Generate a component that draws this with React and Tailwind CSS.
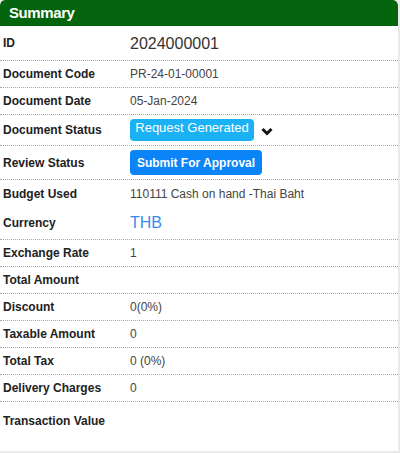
const rows = [
  { label: 'Document Code', value: 'PR-24-01-00001', h: 'h-[27px]' },
  { label: 'Document Date', value: '05-Jan-2024', h: 'h-[27px]' },
]

const lowerRows = [
  { label: 'Exchange Rate', value: '1', h: 'h-[27px]' },
  { label: 'Total Amount', value: '', h: 'h-[27px]' },
  { label: 'Discount', value: '0(0%)', h: 'h-[27px]' },
  { label: 'Taxable Amount', value: '0', h: 'h-[27px]' },
  { label: 'Total Tax', value: '0 (0%)', h: 'h-[27px]' },
  { label: 'Delivery Charges', value: '0', h: 'h-[27px]' },
]

const Label = ({ children }) => (
  <div className="w-[130px] shrink-0 pl-[3px] text-[12px] font-bold text-[#222]">{children}</div>
)

const Row = ({ label, children, h, line = true }) => (
  <div
    className={`flex items-center ${h} ${line ? 'border-b border-dotted border-[#86bd86]' : ''}`}
  >
    <Label>{label}</Label>
    <div className="text-[12px] text-[#444]">{children}</div>
  </div>
)

export default function App() {
  return (
    <div
      className="w-[400px] h-[453px] bg-[#e9e9e9]"
      style={{ fontFamily: '"Liberation Sans", Arial, sans-serif' }}
    >
      <div className="w-[398px] h-[451px] bg-white rounded-t-[5px] overflow-hidden">
        <div className="h-[26px] bg-[#05650f] rounded-t-[5px] flex items-center pl-[9px] text-[15px] tracking-[-0.4px] font-bold text-white">
          Summary
        </div>

        <Row label="ID" h="h-[35px]">
          <span className="text-[16px] text-[#333] pt-[2px] block">2024000001</span>
        </Row>

        {rows.map((r, i) => (
          <Row key={i} label={r.label} h={r.h}>
            {r.value}
          </Row>
        ))}

        <Row label="Document Status" h="h-[31px]">
          <div className="flex items-center">
            <span className="inline-block w-[124px] h-[22px] rounded-[4px] bg-[#1ab2f5] text-white text-[13px] leading-[18px] text-center">
              Request Generated
            </span>
            <svg className="ml-[7px] mt-[2px]" width="12" height="9" viewBox="0 0 12 9">
              <path d="M1.5 2 L6 6.5 L10.5 2" fill="none" stroke="#111" strokeWidth="3" />
            </svg>
          </div>
        </Row>

        <Row label="Review Status" h="h-[34px]">
          <button className="w-[132px] h-[25px] rounded-[4px] bg-[#0b84f7] text-white text-[12px] font-bold">
            Submit For Approval
          </button>
        </Row>

        <Row label="Budget Used" h="h-[27px]" line={false}>
          110111 Cash on hand -Thai Baht
        </Row>

        <Row label="Currency" h="h-[33px]">
          <span className="text-[16px] text-[#3a8af3]">THB</span>
        </Row>

        {lowerRows.map((r, i) => (
          <Row key={i} label={r.label} h={r.h}>
            {r.value}
          </Row>
        ))}

        <div className="pt-[10px]">
          <Label>Transaction Value</Label>
        </div>
      </div>
    </div>
  )
}
